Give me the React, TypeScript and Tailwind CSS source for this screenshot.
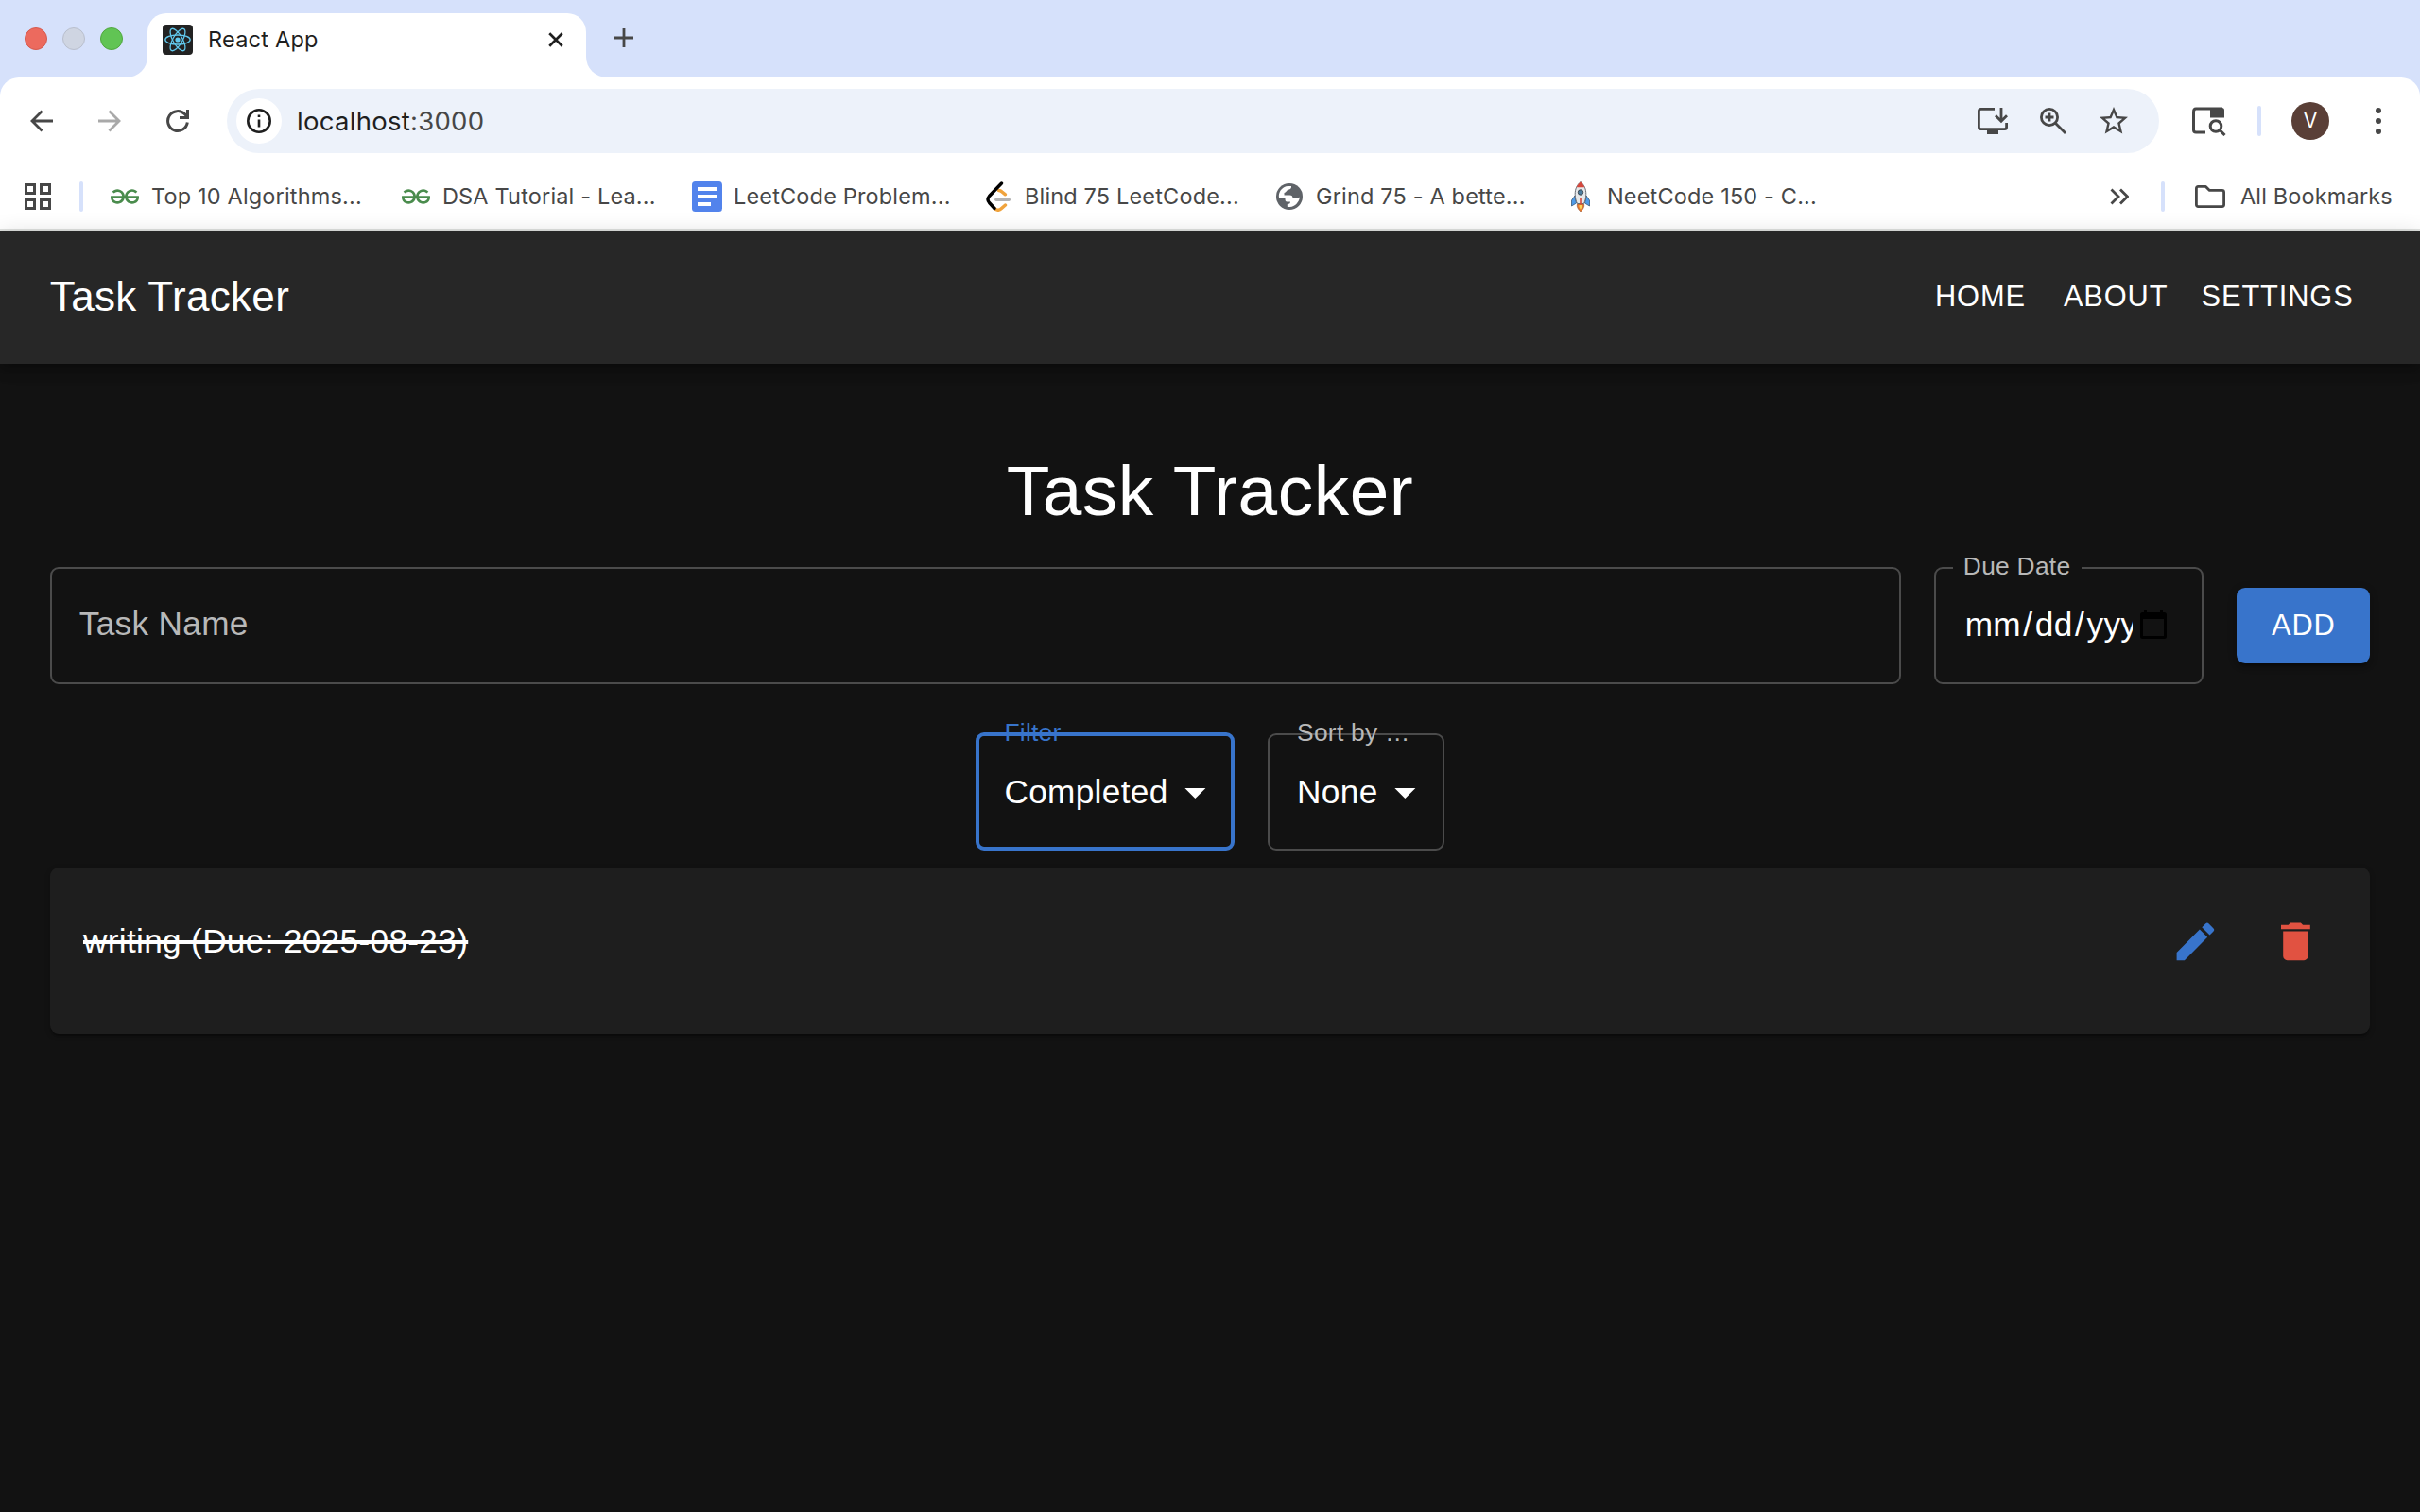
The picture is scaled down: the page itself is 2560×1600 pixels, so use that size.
import type { ReactNode } from "react";
import { MdArrowDropDown, MdDelete, MdEdit, MdStarOutline } from "react-icons/md";
import { SiGeeksforgeeks } from "react-icons/si";

function ReactFavicon() {
  return (
    <svg className="h-8 w-8 shrink-0" viewBox="0 0 32 32" fill="none">
      <rect width="32" height="32" rx="4" fill="#222" />
      <g stroke="#61c8ec" strokeWidth="1.3">
        <ellipse cx="16" cy="16" rx="13.2" ry="5" />
        <ellipse cx="16" cy="16" rx="13.2" ry="5" transform="rotate(60 16 16)" />
        <ellipse cx="16" cy="16" rx="13.2" ry="5" transform="rotate(120 16 16)" />
      </g>
      <circle cx="16" cy="16" r="2.6" fill="#61c8ec" />
    </svg>
  );
}

function DocsIcon() {
  return (
    <svg className="h-8 w-8" viewBox="0 0 32 32">
      <rect width="32" height="32" rx="3.5" fill="#5283ec" />
      <path d="M6 6h20v4H6zM6 14h20v4H6zM6 22h14v4H6z" fill="#fff" />
    </svg>
  );
}

function LeetCodeIcon() {
  return (
    <svg className="h-8 w-8" viewBox="0 0 32 32" fill="none" strokeLinecap="round" strokeWidth="3.4">
      <path d="M16.500 9.500q2 0 3.500 1.500l3.500 2.800" stroke="#f0a33c" />
      <path d="M12 28.500q4 3.500 7.500 0l4-3.500" stroke="#f0a33c" />
      <path d="M13.800 19.200h13.500" stroke="#b3b3b3" />
      <path d="M19.500 2L6.500 15.500q-3 3.500 0 7l5.500 6" stroke="#000" />
    </svg>
  );
}

function GlobeIcon() {
  return (
    <svg className="h-7 w-7" viewBox="0 0 28 28">
      <circle cx="14" cy="14" r="14" fill="#5f6368" />
      <path
        d="M2.800 13C3.300 7.500 7 3.500 12.500 3h3.500c.3 2.200-.8 3.400-3 3.700-2 .3-2 2.800-4.500 3.300v2.500h6c2 0 3 1.200 3 3.200h3.500c2 0 3.200-.5 4-1.200-.8 5.500-5 10-10.500 10.500-.8 0-2-.1-2.700-.3v-2.700c2.200 0 3.200-.8 3.200-2.500h-3.500c-1.500 0-2-1.200-2-3V15H3z"
        fill="#fff"
      />
    </svg>
  );
}

function RocketIcon() {
  return (
    <svg className="h-8 w-8" viewBox="0 0 32 32">
      <path d="M10 15l-3.500 5v6l5-3zM22 15l3.500 5v6l-5-3z" fill="#4f9be8" stroke="#2f4a66" strokeWidth=".7" />
      <path d="M12.500 24h7c1 3-1.500 6-3.500 8-2-2-4.500-5-3.500-8z" fill="#e8792f" stroke="#8a4a2a" strokeWidth=".6" />
      <path d="M14.500 25h3c.3 2-.5 3-1.500 4.500-1-1.500-1.800-2.500-1.500-4.500z" fill="#fbd45a" />
      <path d="M16 .5c4 3.500 5.800 7.500 5.800 13 0 4-1 7.500-2.300 10h-7c-1.300-2.500-2.300-6-2.300-10C10.200 8 12 4 16 .5z" fill="#e6e8ea" stroke="#5a5f66" strokeWidth=".9" />
      <path d="M16 .5c2 1.700 3.400 3.700 4.300 5.800h-8.600C12.600 4.200 14 2.200 16 .5z" fill="#d5473d" />
      <circle cx="16" cy="11.500" r="2.700" fill="#4c7ea0" stroke="#3c4650" strokeWidth="1" />
      <path d="M15.200 17.500h1.600v7h-1.600z" fill="#d5473d" />
    </svg>
  );
}

function Divider() {
  return <div className="h-8 w-1 shrink-0 rounded-full bg-[#d6e1fb]" />;
}

function Bookmark({ icon, label }: { icon: ReactNode; label: string }) {
  return (
    <div className="flex w-[308px] shrink-0 items-center gap-3">
      <div className="flex w-8 shrink-0 justify-center">{icon}</div>
      <span className="whitespace-nowrap tracking-[0.16px]">{label}</span>
    </div>
  );
}

function TabStrip() {
  return (
    <div className="flex h-[82px] bg-[#d6e1fb]">
      <div className="w-[156px] bg-white">
        <div className="flex h-full items-center gap-4 rounded-br-[22px] bg-[#d6e1fb] pl-[26px]">
          <div className="h-6 w-6 rounded-full border border-[#d55a4e] bg-[#ec6a5e]" />
          <div className="h-6 w-6 rounded-full border border-[#b9bfcd] bg-[#cfd5e2]" />
          <div className="h-6 w-6 rounded-full border border-[#51a73f] bg-[#61c454]" />
        </div>
      </div>
      <div className="w-[464px] pt-[14px]">
        <div className="flex h-full items-center rounded-t-[20px] bg-white pr-[23px] pb-3 pl-4">
          <ReactFavicon />
          <span className="ml-4 flex-1 text-[23.5px] tracking-[0.22px] text-[#1f1f1f]">React App</span>
          <svg className="h-[18px] w-[18px]" viewBox="0 0 20 20" stroke="#1f1f1f" strokeWidth="3">
            <path d="M2.500 2.500l15 15M17.500 2.500l-15 15" />
          </svg>
        </div>
      </div>
      <div className="flex-1 bg-white">
        <div className="flex h-full items-center rounded-bl-[22px] bg-[#d6e1fb] pb-0.5 pl-[30px]">
          <svg className="h-5 w-5" viewBox="0 0 20 20" stroke="#474747" strokeWidth="2.800">
            <path d="M10 0v20M0 10h20" />
          </svg>
        </div>
      </div>
    </div>
  );
}

function Toolbar() {
  return (
    <div className="flex h-[92px] items-center pl-8">
      <svg className="h-6 w-6" viewBox="0 0 24 24" fill="none" stroke="#474747" strokeWidth="2.800">
        <path d="M24 12H2.500M12.500 1.500L2 12l10.500 10.500" />
      </svg>
      <svg className="ml-12 h-6 w-6" viewBox="0 0 24 24" fill="none" stroke="#a9a9a9" strokeWidth="2.800">
        <path d="M0 12h21.500M11.500 1.500L22 12 11.500 22.500" />
      </svg>
      <svg className="ml-12 h-6 w-6" viewBox="0 0 24 24" fill="none" stroke="#474747" strokeWidth="3">
        <path d="M22.300 13.500A10.400 10.400 0 1 1 19.500 4.800L22 7.500" />
        <path d="M22.500 0v8.500H14" />
      </svg>
      <div className="ml-10 flex h-[68px] w-[2044px] items-center rounded-full bg-[#edf2fa] pr-[30px] pl-2.5">
        <div className="flex h-12 w-12 items-center justify-center rounded-full bg-white">
          <svg className="h-[26px] w-[26px]" viewBox="0 0 26 26" fill="none" stroke="#1f1f1f">
            <circle cx="13" cy="13" r="11.700" strokeWidth="2.600" />
            <path d="M13 11.500v8M13 6.500v2.600" strokeWidth="2.600" />
          </svg>
        </div>
        <span className="ml-4 flex-1 pt-0.5 text-[27.5px] tracking-[0.28px] text-[#1f1f1f]">
          localhost<span className="text-[#474747]">:3000</span>
        </span>
        <svg className="h-7 w-8" viewBox="0 0 32 28" fill="none" stroke="#474747" strokeWidth="2.800">
          <path d="M18 1.400H3.500Q1.400 1.400 1.400 3.500v17q0 2.100 2.100 2.100h25q2.100 0 2.100-2.100V16" />
          <path d="M25 0v14M19 8.300l6 6 6-6" />
          <path d="M10 24h12v4H10z" fill="#474747" stroke="none" />
        </svg>
        <svg className="ml-[34px] h-7 w-7" viewBox="0 0 28 28" fill="none" stroke="#474747" strokeWidth="2.800">
          <circle cx="10" cy="10" r="8.600" />
          <path d="M16.300 16.300L27 27M10 5.500v9M5.500 10h9" />
        </svg>
        <MdStarOutline className="ml-8 h-9 w-9 text-[#474747]" />
      </div>
      <svg className="ml-[35px] h-8 w-9" viewBox="0 0 36 32" fill="none" stroke="#474747" strokeWidth="3">
        <path d="M14 28H4Q1.500 28 1.500 25.500v-19Q1.500 3 4 3h28" />
        <path d="M19 2h12.500q2.500 0 2.500 2.500v8H19z" fill="#474747" stroke="none" />
        <circle cx="25" cy="21.500" r="5.800" />
        <path d="M29 25.500l5.500 5.500" />
      </svg>
      <div className="ml-[33px]">
        <Divider />
      </div>
      <div className="ml-8 flex h-10 w-10 items-center justify-center rounded-full bg-[#5a3f37] text-[21px] text-white">V</div>
      <svg className="ml-12 h-7 w-2" viewBox="0 0 8 28" fill="#474747">
        <circle cx="4" cy="3" r="3" />
        <circle cx="4" cy="14" r="3" />
        <circle cx="4" cy="25" r="3" />
      </svg>
    </div>
  );
}

function BookmarksBar() {
  return (
    <div className="flex h-[68px] items-center pl-[26px] text-[23.5px] text-[#474747]">
      <svg className="h-7 w-7" viewBox="0 0 28 28" fill="none" stroke="#474747" strokeWidth="3">
        <path d="M1.500 1.500h9v9h-9zM17.500 1.500h9v9h-9zM1.500 17.500h9v9h-9zM17.500 17.500h9v9h-9z" />
      </svg>
      <div className="ml-[30px]">
        <Divider />
      </div>
      <div className="ml-7 flex">
        <Bookmark icon={<SiGeeksforgeeks className="h-[30px] w-[30px] text-[#4a8c4d]" />} label="Top 10 Algorithms..." />
        <Bookmark icon={<SiGeeksforgeeks className="h-[30px] w-[30px] text-[#4a8c4d]" />} label="DSA Tutorial - Lea..." />
        <Bookmark icon={<DocsIcon />} label="LeetCode Problem..." />
        <Bookmark icon={<LeetCodeIcon />} label="Blind 75 LeetCode..." />
        <Bookmark icon={<GlobeIcon />} label="Grind 75 - A bette..." />
        <Bookmark icon={<RocketIcon />} label="NeetCode 150 - C..." />
      </div>
      <svg className="ml-[268px] h-[18px] w-[20px]" viewBox="0 0 20 18" fill="none" stroke="#474747" strokeWidth="2.800">
        <path d="M1.500 1.500L9 9l-7.500 7.500M11 1.500L18.500 9 11 16.500" />
      </svg>
      <div className="ml-[34px]">
        <Divider />
      </div>
      <svg className="ml-8 h-6 w-8" viewBox="0 0 32 24" fill="none" stroke="#474747" strokeWidth="2.800" strokeLinejoin="round">
        <path d="M1.400 3.400q0-2 2-2h8l4 4h13.200q2 0 2 2v13.200q0 2-2 2H3.400q-2 0-2-2z" />
      </svg>
      <span className="ml-4 whitespace-nowrap tracking-[0.15px]">All Bookmarks</span>
    </div>
  );
}

function NavButton({ label }: { label: string }) {
  return (
    <button className="min-w-[140.8px] px-[17.6px] text-center text-[30.8px] tracking-[0.88px]">{label}</button>
  );
}

function SelectField({
  label,
  value,
  frame,
  labelStyle,
}: {
  label: string;
  value: string;
  frame: string;
  labelStyle: string;
}) {
  return (
    <div className={`relative flex items-center rounded-[9px] ${frame}`}>
      <span className={`absolute whitespace-nowrap text-[26.4px] leading-8 tracking-[0.25px] ${labelStyle}`}>{label}</span>
      <span className="flex-1 text-[35.2px] tracking-[0.33px]">{value}</span>
      <MdArrowDropDown className="h-[52.8px] w-[52.8px]" />
    </div>
  );
}

function CalendarIcon() {
  return (
    <svg className="h-[31px] w-7" viewBox="0 0 28 31" fill="#000">
      <path d="M4 0h3v3h14V0h3v3h1.500Q28 3 28 5.500v23Q28 31 25.500 31h-23Q0 31 0 28.500v-23Q0 3 2.500 3H4zM3 10v18h22V10z" fillRule="evenodd" />
    </svg>
  );
}

export default function App() {
  return (
    <div className="flex h-[1600px] w-[2560px] flex-col overflow-hidden bg-[#121212] font-['Liberation_Sans',Arial,sans-serif] text-white">
      <div className="shrink-0 bg-[#d6e1fb] font-[Inter,sans-serif]">
        <TabStrip />
        <div className="h-[162px] rounded-t-[20px] border-b-2 border-[#e1e3e1] bg-white">
          <Toolbar />
          <BookmarksBar />
        </div>
      </div>

      <header className="flex h-[141px] shrink-0 items-center justify-between bg-[#272727] px-[52.8px] shadow-[0_4px_9px_-2px_rgba(0,0,0,0.2),0_9px_11px_rgba(0,0,0,0.14),0_2px_22px_rgba(0,0,0,0.12)]">
        <span className="pb-px text-[44px] tracking-[0.33px]">Task Tracker</span>
        <nav className="flex">
          <NavButton label="HOME" />
          <NavButton label="ABOUT" />
          <NavButton label="SETTINGS" />
        </nav>
      </header>

      <main className="flex flex-col px-[52.8px] pt-[88px]">
        <h1 className="text-center text-[74.8px] leading-[92px] tracking-[0.55px]">Task Tracker</h1>

        <div className="mt-[35px] flex h-[124px] items-center gap-[35.2px]">
          <div className="flex h-full flex-1 items-center rounded-[9px] border-2 border-[#4b4b4b] pb-1 pl-[29px] text-[35.2px] tracking-[0.33px] text-[#b8b8b8]">
            Task Name
          </div>
          <div className="relative flex h-full w-[285.4px] items-center rounded-[9px] border-2 border-[#4b4b4b] pl-[29px]">
            <span className="absolute -top-[19px] left-[18px] bg-[#121212] pr-3 pl-[11px] text-[26.4px] leading-8 tracking-[0.25px] text-[#b8b8b8]">
              Due Date
            </span>
            <span className="flex w-[179px] overflow-hidden whitespace-nowrap pb-px text-[35.2px] tracking-[0.33px]">
              <span className="pr-[2.4px] pl-[1.8px]">mm</span>/<span className="px-[2.4px]">dd</span>/<span className="pl-[2.4px]">yyy</span>
            </span>
            <span className="ml-2 shrink-0 pb-1">
              <CalendarIcon />
            </span>
          </div>
          <button className="h-[80px] w-[140.8px] rounded-[9px] bg-[#3874cb] text-[30.8px] tracking-[0.88px] shadow-[0_7px_2px_-4px_rgba(0,0,0,0.2),0_4px_4px_rgba(0,0,0,0.14),0_2px_11px_rgba(0,0,0,0.12)]">
            ADD
          </button>
        </div>

        <div className="mt-[51px] flex h-[125px] items-stretch justify-center gap-[35.2px]">
          <SelectField
            label="Filter"
            value="Completed"
            frame="w-[274px] border-4 border-[#3874cb] pt-px pl-[26.5px] pr-[11px]"
            labelStyle="-top-[20px] left-[26.5px] text-[#3874cb]"
          />
          <SelectField
            label="Sort by …"
            value="None"
            frame="mt-px w-[187px] border-2 border-[#4b4b4b] pl-[29px] pr-[13px]"
            labelStyle="-top-[19px] left-[29px] text-[#b8b8b8]"
          />
        </div>

        <div className="mt-[18px] h-[176px] rounded-[9px] bg-[#1e1e1e] shadow-[0_4px_2px_-2px_rgba(0,0,0,0.2),0_2px_2px_rgba(0,0,0,0.14),0_2px_7px_rgba(0,0,0,0.12)]">
          <div className="flex h-[157px] items-center pr-[52.8px] pl-[35.2px]">
            <span className="flex-1 text-[35.2px] tracking-[0.33px]">
              <span className="line-through decoration-[3.5px]">writing (Due: 2025-08-23)</span>
            </span>
            <MdEdit className="h-[52.8px] w-[52.8px] text-[#3874cb]" />
            <MdDelete className="ml-[53px] h-[52.8px] w-[52.8px] text-[#e15241]" />
          </div>
        </div>
      </main>
    </div>
  );
}
